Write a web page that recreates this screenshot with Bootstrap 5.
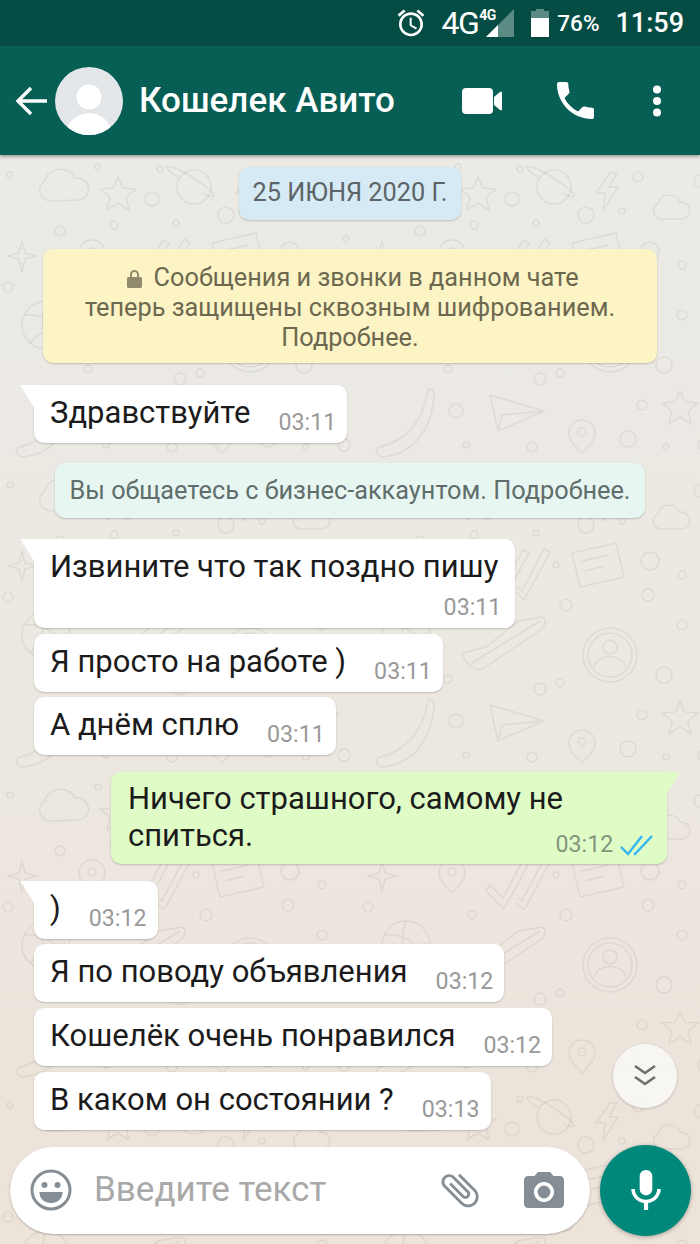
<!DOCTYPE html>
<html lang="ru">
<head>
  <meta charset="UTF-8">
  <meta name="viewport" content="width=device-width, initial-scale=1.0">
  <title>Кошелек Авито</title>
  <link href="https://cdn.jsdelivr.net/npm/bootstrap@5.3.0/dist/css/bootstrap.min.css" rel="stylesheet">
  <style>
    body {
      font-family: Roboto, "Liberation Sans", sans-serif;
      background-color: #ece6de;
      overflow: hidden;
    }

    .screen { height: 1244px; }

    /* status bar */
    .status-bar {
      height: 46px;
      background-color: #054d44;
      color: #fff;
      padding-right: 16px;
    }
    .status-bar svg { display: block; }
    .net-main { font-size: 32px; font-weight: 400; letter-spacing: -1.5px; margin-left: 15px; line-height: 1; }
    .net-small { font-size: 14px; font-weight: 700; letter-spacing: -.5px; line-height: 1; align-self: flex-start; margin-top: 8px; margin-left: 1px; width: 16px; }
    .signal { margin-left: -9px; }
    .battery { margin-left: 17px; }
    .percent { font-size: 22.500px; font-weight: 500; margin-left: 8px; line-height: 1; }
    .clock { font-size: 27px; font-weight: 500; margin-left: 16px; line-height: 1; }

    /* chat header */
    .chat-header {
      height: 109px;
      background-color: #075e54;
      color: #fff;
      padding-left: 15px;
      box-shadow: 0 2px 3px rgba(0, 0, 0, .3);
      position: relative;
      z-index: 2;
    }
    .avatar-pic {
      width: 68px;
      height: 68px;
      border-radius: 50%;
      margin-left: 7px;
      margin-right: 16px;
      overflow: hidden;
    }
    .chat-title { font-size: 35px; font-weight: 500; line-height: 1; width: 323px; white-space: nowrap; }
    .head-video { margin-right: 55px; }
    .head-phone { margin-right: 58px; }

    /* chat */
    .chat-area {
      position: relative;
      background: linear-gradient(#ebeae5, #ece9e3 35%, #ece3d9);
      overflow: hidden;
    }
    .doodles { position: absolute; inset: 0; width: 100%; height: 100%; }
    .chat-list { position: relative; padding-top: 12px; }

    .chip {
      font-size: 25.300px;
      line-height: 30px;
      text-align: center;
      border-radius: 10px;
      box-shadow: 0 1px 2px rgba(0, 0, 0, .2);
      align-self: center;
    }
    .chip-date {
      background-color: #d5eaf5;
      color: #5c6467;
      padding: 11px 14px 12px;
      margin-bottom: 29px;
    }
    .chip-lock {
      width: 614px;
      height: 114px;
      background-color: #fdf4c5;
      color: #6c684f;
      padding-top: 14px;
      margin-bottom: 22px;
    }
    .chip-lock svg { vertical-align: -2px; margin-left: 6px; margin-right: 5px; }
    .chip-biz {
      width: 590px;
      background-color: #e8f6f2;
      color: #5f6e6b;
      padding: 13px 0 12px;
      margin: 14px 0 21px;
    }

    .bubble {
      position: relative;
      width: fit-content;
      font-size: 31px;
      line-height: 37px;
      color: #1b1b1b;
      background-color: #fff;
      border-radius: 10px;
      box-shadow: 0 1px 2px rgba(0, 0, 0, .2);
      margin-left: 34px;
      margin-bottom: 5.700px;
      padding: 9px 14px 12px 16px;
    }
    .bubble-tail { border-top-left-radius: 0; }
    .bubble-tail::before {
      content: "";
      position: absolute;
      left: -14px;
      top: 0;
      width: 15px;
      height: 24px;
      background-color: #fff;
      clip-path: polygon(0 0, 100% 0, 100% 100%);
    }
    .stamp {
      font-size: 23.200px;
      line-height: 24px;
      color: #999;
      margin-left: 28px;
      margin-right: -3px;
      white-space: nowrap;
      align-self: flex-end;
      margin-bottom: -3px;
    }
    .bubble-stack { padding: 9px 17px 9px 16px; margin-bottom: 6px; }
    .bubble-stack .stamp { margin-top: 10px; margin-bottom: 0; }

    .bubble-out {
      width: 556px;
      height: 92px;
      align-self: flex-end;
      margin: 10.500px 33px 17px 0;
      background-color: #e0fcc6;
      border-top-right-radius: 0;
      padding: 8px 14px 0 17px;
    }
    .bubble-out::after {
      content: "";
      position: absolute;
      right: -13px;
      top: 0;
      width: 14px;
      height: 24px;
      background-color: #e0fcc6;
      clip-path: polygon(0 0, 100% 0, 0 100%);
    }
    .stamp-out {
      position: absolute;
      right: 14px;
      bottom: 8px;
      color: #84957b;
      margin: 0;
    }
    .stamp-out svg { vertical-align: -4px; margin-left: 1px; }

    /* input row */
    .scroll-down {
      position: absolute;
      right: 23px;
      bottom: 136px;
      width: 64px;
      height: 64px;
      background-color: rgba(247, 246, 244, .97);
      border-radius: 50%;
      box-shadow: 0 1px 3px rgba(0, 0, 0, .2);
    }
    .input-row {
      position: absolute;
      left: 10px;
      right: 9px;
      bottom: 8.500px;
    }
    .input-pill {
      width: 580px;
      height: 87px;
      background-color: #fff;
      border-radius: 44px;
      box-shadow: 0 1px 2px rgba(0, 0, 0, .25);
      padding: 0 26px 0 20px;
    }
    .input-hint { font-size: 35px; color: #a9a9a9; margin-left: 22px; width: 343px; white-space: nowrap; }
    .clip-icon { transform: rotate(-45deg); }
    .mic-btn {
      width: 91px;
      height: 91px;
      background-color: #00897b;
      border-radius: 50%;
      box-shadow: 0 1px 4px rgba(0, 0, 0, .3);
    }
  </style>
</head>
<body>
  <div class="screen d-flex flex-column">

    <div class="status-bar d-flex align-items-center justify-content-end flex-shrink-0">
      <svg width="32" height="32" viewBox="0 0 24 24" fill="#fff"><path d="M22 5.720l-4.600-3.860-1.290 1.530 4.600 3.860L22 5.720zM7.880 3.390L6.600 1.860 2 5.710l1.290 1.530 4.590-3.850zM12.500 8H11v6l4.750 2.850.75-1.230-4-2.370V8zM12 4c-4.970 0-9 4.030-9 9s4.030 9 9 9 9-4.030 9-9-4.030-9-9-9zm0 16c-3.870 0-7-3.130-7-7s3.130-7 7-7 7 3.130 7 7-3.130 7-7 7z"/></svg>
      <span class="net-main">4G</span>
      <span class="net-small">4G</span>
      <svg class="signal" width="28" height="28" viewBox="0 0 28 28"><path d="M28 0V28H0z" fill="#fff" opacity=".35"/><path d="M12 16V28H0z" fill="#fff"/></svg>
      <svg class="battery" width="18" height="28" viewBox="0 0 18 28"><path d="M5 0h8v2h5v7H0V2h5z" fill="#fff" opacity=".35"/><rect y="9" width="18" height="19" fill="#fff"/></svg>
      <span class="percent">76%</span>
      <span class="clock">11:59</span>
    </div>

    <div class="chat-header d-flex align-items-center flex-shrink-0">
      <svg width="33" height="30" viewBox="0 0 33 30" fill="none" stroke="#fff" stroke-width="3.400"><path d="M32 15H3M16 2L3 15l13 13"/></svg>
      <div class="avatar-pic flex-shrink-0">
        <svg width="68" height="68" viewBox="0 0 68 68"><rect width="68" height="68" fill="#e2e6e9"/><circle cx="34" cy="30" r="12.500" fill="#fff"/><ellipse cx="34" cy="68" rx="23" ry="22" fill="#fff"/></svg>
      </div>
      <div class="chat-title">Кошелек Авито</div>
      <svg class="head-video" width="40" height="26" viewBox="0 0 40 26" fill="#fff"><rect width="31" height="26" rx="4"/><path d="M32 9l6-5c1-.7 2-.2 2 1v16c0 1.200-1 1.700-2 1l-6-5z"/></svg>
      <svg class="head-phone" width="37" height="37" viewBox="3 3 18 18" fill="#fff"><path d="M6.620 10.790c1.440 2.830 3.760 5.140 6.590 6.590l2.200-2.200c.27-.27.67-.36 1.020-.24 1.120.37 2.330.57 3.570.57.55 0 1 .45 1 1V20c0 .55-.45 1-1 1-9.390 0-17-7.610-17-17 0-.55.45-1 1-1h3.500c.55 0 1 .45 1 1 0 1.250.2 2.450.57 3.570.11.35.03.74-.25 1.020l-2.200 2.200z"/></svg>
      <svg width="10" height="32" viewBox="0 0 10 32" fill="#fff"><circle cx="5" cy="4.500" r="4"/><circle cx="5" cy="16" r="4"/><circle cx="5" cy="27.500" r="4"/></svg>
    </div>

    <div class="chat-area flex-grow-1">
      <!-- обои чата -->
      <svg class="doodles" xmlns="http://www.w3.org/2000/svg">
        <defs>
          <pattern id="wall" width="360" height="310" patternUnits="userSpaceOnUse">
            <g fill="none" stroke="#000" stroke-opacity=".06" stroke-width="1.500">
              <!-- облако -->
              <path d="M52 46c-12 0-17-14-7-20 2-14 24-16 30-3 14-2 20 18 4 22z"/>
              <!-- звезда -->
              <path d="M118 22l5 11 13 1-10 8 3 13-11-7-11 7 3-13-10-8 13-1z"/>
              <!-- планета -->
              <circle cx="194" cy="32" r="17"/><path d="M178 22c-14-8-16-14 0-8 12 6 22 13 32 21 8 8 2 8-6 4"/>
              <!-- молния -->
              <path d="M250 18l-14 20h9l-2 18 15-24h-9l8-14z"/>
              <!-- облако -->
              <path d="M302 64c-9 0-12-11-4-15 2-11 18-12 22-2 11-1 14 14 3 17z"/>
              <!-- искра -->
              <path d="M22 86l3 12 11 3-11 3-3 13-3-13-11-3 11-3z"/>
              <!-- метка -->
              <path d="M92 118c-8-8-13-13-13-20a13 13 0 0 1 26 0c0 7-5 12-13 20z"/><circle cx="92" cy="97" r="4"/>
              <!-- галочки -->
              <path d="M130 110l13 13 20-38 6 3-25 46-18-18zM158 122l4 4 22-42 6 3-26 48-8-8"/>
              <!-- записка -->
              <path d="M212 88l44-10 8 34-44 10zM222 96l26-6M225 106l20-5"/>
              <!-- мяч -->
              <circle cx="46" cy="170" r="24"/><path d="M24 160c16-2 34 6 42 24M46 146c-6 16-4 34 6 47M30 188c8-10 18-14 36-20"/>
              <!-- кроссовок -->
              <path d="M102 188l24-6 32-26 24-4c4 2 4 8 0 12l-60 40c-8 2-16-4-20-16zM112 198l68-42"/>
              <!-- аватар -->
              <circle cx="250" cy="190" r="27"/><circle cx="250" cy="190" r="22"/><circle cx="250" cy="182" r="7"/><path d="M234 202c4-14 28-14 32 0"/>
              <!-- банан -->
              <path d="M20 292c26-6 44-26 48-58 4 0 6 2 6 6-2 34-20 58-50 62-8 0-10-8-4-10z"/>
              <!-- бумажный самолёт -->
              <path d="M130 240l54 16-46 20zM138 276l4-16 42-4"/>
              <!-- звезда -->
              <path d="M320 236l5 11 13 1-10 8 3 13-11-7-11 7 3-13-10-8 13-1z"/>
              <!-- метка -->
              <path d="M222 298c-8-8-13-13-13-20a13 13 0 0 1 26 0c0 7-5 12-13 20z"/><circle cx="222" cy="277" r="4"/>
              <!-- кружки -->
              <circle cx="10" cy="20" r="3"/><circle cx="98" cy="12" r="3"/><circle cx="152" cy="44" r="7"/><circle cx="160" cy="14" r="3"/>
              <circle cx="226" cy="60" r="8"/><circle cx="278" cy="22" r="5"/><circle cx="340" cy="26" r="6"/><circle cx="262" cy="56" r="3"/>
              <circle cx="60" cy="76" r="5"/><circle cx="114" cy="70" r="4"/><circle cx="176" cy="68" r="3"/><circle cx="196" cy="100" r="3"/>
              <circle cx="290" cy="96" r="9"/><circle cx="322" cy="110" r="4"/><circle cx="346" cy="84" r="3"/><circle cx="288" cy="130" r="6"/>
              <circle cx="112" cy="140" r="4"/><circle cx="206" cy="140" r="6"/><circle cx="8" cy="132" r="5"/><circle cx="322" cy="160" r="5"/>
              <circle cx="88" cy="214" r="4"/><circle cx="200" cy="218" r="4"/><circle cx="180" cy="224" r="6"/><circle cx="304" cy="210" r="8"/>
              <circle cx="346" cy="200" r="3"/><circle cx="96" cy="256" r="7"/><circle cx="106" cy="290" r="3"/><circle cx="282" cy="250" r="5"/>
              <circle cx="268" cy="284" r="8"/><circle cx="306" cy="292" r="3"/><circle cx="172" cy="292" r="5"/><circle cx="344" cy="290" r="6"/>
            </g>
          </pattern>
        </defs>
        <rect width="100%" height="100%" fill="url(#wall)"/>
      </svg>

      <div class="chat-list d-flex flex-column">
        <div class="chip chip-date">25 ИЮНЯ 2020 Г.</div>
        <div class="chip chip-lock">
          <svg width="15" height="19" viewBox="0 0 15 19" fill="#8f8a6d"><path d="M3 8V5.500a4.500 4.500 0 0 1 9 0V8h1.500c.8 0 1.500.7 1.500 1.500v8c0 .8-.7 1.500-1.500 1.500h-12C.7 19 0 18.300 0 17.500v-8C0 8.700.7 8 1.500 8zm2 0h5V5.500a2.500 2.500 0 0 0-5 0z"/></svg>
          Сообщения и звонки в данном чате<br>теперь защищены сквозным шифрованием.<br>Подробнее.
        </div>

        <div class="bubble bubble-tail d-flex"><span>Здравствуйте</span><span class="stamp">03:11</span></div>
        <div class="chip chip-biz">Вы общаетесь с бизнес-аккаунтом. Подробнее.</div>
        <div class="bubble bubble-tail bubble-stack d-flex flex-column"><span>Извините что так поздно пишу</span><span class="stamp">03:11</span></div>
        <div class="bubble d-flex"><span>Я просто на работе )</span><span class="stamp">03:11</span></div>
        <div class="bubble d-flex"><span>А днём сплю</span><span class="stamp">03:11</span></div>

        <div class="bubble bubble-out">Ничего страшного, самому не<br>спиться.
          <span class="stamp stamp-out">03:12
            <svg width="33" height="21" viewBox="0 0 33 21" fill="none" stroke="#34b7f1" stroke-width="2.400"><path d="M1 12l7 7L22 1M14 18l1 1L32 1"/></svg>
          </span>
        </div>

        <div class="bubble bubble-tail d-flex"><span>)</span><span class="stamp">03:12</span></div>
        <div class="bubble d-flex"><span>Я по поводу объявления</span><span class="stamp">03:12</span></div>
        <div class="bubble d-flex"><span>Кошелёк очень понравился</span><span class="stamp">03:12</span></div>
        <div class="bubble d-flex"><span>В каком он состоянии ?</span><span class="stamp">03:13</span></div>
      </div>

      <div class="scroll-down d-flex align-items-center justify-content-center">
        <svg width="24" height="24" viewBox="0 0 24 24" fill="none" stroke="#6f6f6f" stroke-width="2.600"><path d="M2 2l10 7 10-7M2 13l10 7 10-7"/></svg>
      </div>

      <div class="input-row d-flex align-items-center justify-content-between">
        <div class="input-pill d-flex align-items-center">
          <svg class="flex-shrink-0" width="42" height="42" viewBox="0 0 42 42"><circle cx="21" cy="21" r="19" fill="none" stroke="#858e94" stroke-width="3"/><circle cx="14.500" cy="16" r="3" fill="#858e94"/><circle cx="27.500" cy="16" r="3" fill="#858e94"/><path d="M9.500 23h23c0 7-5 11-11.500 11S9.500 30 9.500 23z" fill="#858e94"/></svg>
          <span class="input-hint">Введите текст</span>
          <svg class="clip-icon flex-shrink-0" width="46" height="46" viewBox="0 0 24 24" fill="#858e94"><path d="M16.500 6v11.500c0 2.210-1.790 4-4 4s-4-1.790-4-4V5c0-1.380 1.120-2.500 2.500-2.500s2.500 1.120 2.500 2.500v10.500c0 .55-.45 1-1 1s-1-.45-1-1V6H10v9.500c0 1.380 1.120 2.500 2.500 2.500s2.500-1.120 2.500-2.500V5c0-2.210-1.790-4-4-4S7 2.790 7 5v12.500c0 3.040 2.460 5.500 5.500 5.500s5.500-2.460 5.500-5.500V6h-1.500z"/></svg>
          <svg class="flex-shrink-0 ms-auto" width="40" height="36" viewBox="2 2 20 18" fill="#858e94"><circle cx="12" cy="12" r="3.200"/><path d="M9 2L7.170 4H4c-1.100 0-2 .9-2 2v12c0 1.100.9 2 2 2h16c1.100 0 2-.9 2-2V6c0-1.100-.9-2-2-2h-3.170L15 2H9zm3 15c-2.760 0-5-2.240-5-5s2.240-5 5-5 5 2.240 5 5-2.240 5-5 5z"/></svg>
        </div>
        <div class="mic-btn d-flex align-items-center justify-content-center flex-shrink-0">
          <svg width="30" height="40" viewBox="5 2 14 19" fill="#fff"><path d="M12 14c1.660 0 2.990-1.340 2.990-3L15 5c0-1.660-1.340-3-3-3S9 3.340 9 5v6c0 1.660 1.340 3 3 3zm5.300-3c0 3-2.540 5.100-5.300 5.100S6.700 14 6.700 11H5c0 3.410 2.720 6.230 6 6.720V21h2v-3.280c3.280-.48 6-3.300 6-6.720h-1.700z"/></svg>
        </div>
      </div>
    </div>
  </div>
  <script src="https://cdn.jsdelivr.net/npm/bootstrap@5.3.0/dist/js/bootstrap.bundle.min.js"></script>
</body>
</html>
